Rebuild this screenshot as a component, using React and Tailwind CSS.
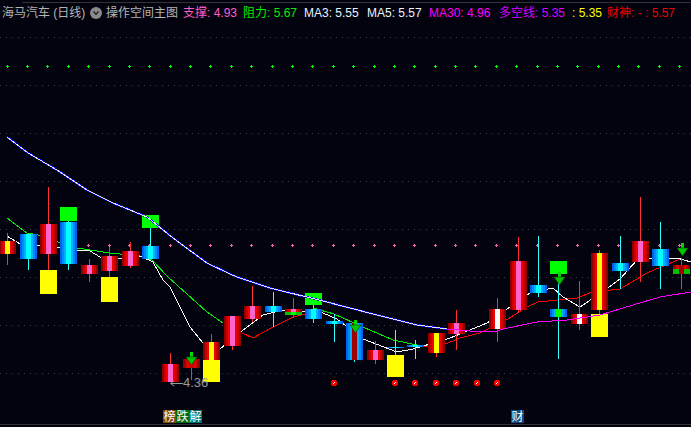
import React from 'react';

const FONT = '"Liberation Sans", "Noto Sans CJK SC", sans-serif';

const STRIPES = {
    r: ['#900000', '#c80000', '#f00000'],
    b: ['#0060f0', '#0088ff', '#00b0ff'],
};

// t: stripe set, c: centre colour, x: left edge, y/h: body, w: wick [top, bottom, colour]
const candles = [
    { t: 'r', c: '#ffff00', x: -1, y: 241, h: 13, w: [233, 265, '#ff3030'] },
    { t: 'b', c: '#00ffff', x: 20, y: 234, h: 25, w: [259, 270, '#30ffff'] },
    { t: 'r', c: '#ff66cc', x: 40, y: 224, h: 30, w: [187, 270, '#ff3030'], box: [270, 24, '#ffff00'] },
    { t: 'b', c: '#00ffff', x: 60, y: 222, h: 42, w: [221, 270, '#30ffff'], box: [207, 14, '#00ff00'] },
    { t: 'r', c: '#ff66cc', x: 81, y: 265, h: 9, w: [259, 282, '#ff3030'] },
    { t: 'r', c: '#ff66cc', x: 101, y: 256, h: 15, w: [247, 277, '#ff3030'], box: [277, 25, '#ffff00'] },
    { t: 'r', c: '#ff66cc', x: 122, y: 251, h: 15, w: [242, 268, '#ff3030'] },
    { t: 'b', c: '#00ffff', x: 142, y: 246, h: 13, w: [228, 246, '#30ffff'], box: [215, 13, '#00ff00'] },
    { t: 'r', c: '#ff66cc', x: 162, y: 364, h: 18, w: [353, 364, '#ff3030'] },
    { t: 'r', c: '#d00000', x: 183, y: 359, h: 9, w: [368, 380, '#ff3030'] },
    { t: 'r', c: '#ffff00', x: 203, y: 342, h: 18, w: [334, 342, '#ff3030'], box: [360, 22, '#ffff00'] },
    { t: 'r', c: '#ff66cc', x: 224, y: 316, h: 30, w: [346, 350, '#ff3030'] },
    { t: 'r', c: '#ff66cc', x: 244, y: 306, h: 13, w: [286, 322, '#ff3030'] },
    { t: 'b', c: '#00ffff', x: 265, y: 306, h: 6, w: [292, 327, '#30ffff'] },
    { t: 'r', c: '#ff66cc', x: 285, y: 309, h: 6, w: [298, 318, '#ff3030'], low: true },
    { t: 'b', c: '#00ffff', x: 305, y: 309, h: 10, w: [305, 323, '#30ffff'], box: [293, 12, '#00ff00'] },
    { t: 'b', c: '#00ffff', x: 326, y: 321, h: 3, w: [314, 342, '#30ffff'] },
    { t: 'b', c: '#a00000', x: 346, y: 323, h: 37, w: [360, 362, '#30ffff'] },
    { t: 'r', c: '#ff66cc', x: 367, y: 350, h: 10, w: [341, 364, '#ff3030'] },
    { t: 'b', c: '#00ffff', x: 387, y: 347, h: 1, w: [330, 355, '#c8c8c8'], box: [355, 22, '#ffff00'] },
    { t: 'b', c: '#00ffff', x: 407, y: 345, h: 2, w: [340, 359, '#c8c8c8'] },
    { t: 'r', c: '#ffff00', x: 428, y: 333, h: 20, w: [353, 357, '#ff3030'] },
    { t: 'r', c: '#ff66cc', x: 448, y: 323, h: 11, w: [310, 350, '#ff3030'] },
    { t: 'r', c: '#ffffff', x: 489, y: 309, h: 20, w: [298, 342, '#ff3030'] },
    { t: 'r', c: '#ff66cc', x: 510, y: 261, h: 49, w: [237, 313, '#ff3030'] },
    { t: 'b', c: '#00ffff', x: 530, y: 285, h: 8, w: [236, 297, '#30ffff'] },
    { t: 'b', c: '#00ff00', x: 550, y: 309, h: 8, w: [274, 359, '#30ffff'], box: [261, 13, '#00ff00'] },
    { t: 'r', c: '#ffffff', x: 571, y: 314, h: 10, w: [281, 330, '#ff3030'] },
    { t: 'r', c: '#ffff00', x: 591, y: 253, h: 57, w: [250, 314, '#ff3030'], box: [314, 23, '#ffff00'] },
    { t: 'b', c: '#00ffff', x: 612, y: 263, h: 8, w: [236, 289, '#30ffff'] },
    { t: 'r', c: '#ff66cc', x: 632, y: 241, h: 21, w: [197, 282, '#ff3030'] },
    { t: 'b', c: '#00ffff', x: 652, y: 249, h: 17, w: [222, 289, '#30ffff'] },
    { t: 'r', c: '#a00000', x: 673, y: 265, h: 9, w: [258, 289, '#ff3030'], low: true },
];

const blueLine = '7,137 28,153 57,170 87,190 113,203 147,217 173,238 207,263 230,274 237,277 270,288 323,301 373,314 417,325 447,329';
const purpleLine = '447,329 470,331 497,331 503,329 537,322 567,320 600,315 633,305 660,297 691,292';
const whiteLine = '7,236 20,244 37,245 77,250 90,251 100,257 120,259 140,256 153,262 163,280 170,287 190,327 203,343 220,349 242,331 263,315 283,310 323,313 337,319 363,339 397,352 413,349 430,344 450,338 460,334 487,323 510,307 530,293 553,288 563,297 580,307 608,288 620,279 637,260 657,258 677,258 691,262';
const redLines = [
    '242,333 253,338 273,327 293,317 305,314',
    '410,346 427,346 443,345 460,338 480,333 503,322 527,307 538,302 577,298 592,292 620,289 647,273 680,259',
];
const greenLines = [
    '7,218 27,233 38,235 58,242 77,248 110,253 140,256 152,260 168,277 187,294 207,312 223,323',
    '313,308 334,314 363,327 393,340 417,345',
];

const grid = [37, 85, 133, 181, 229, 277, 325, 373];
const dots = Array.from({ length: 34 }, (_, i) => Math.round(6.7 + i * 20.38));
const diamonds = [334, 395, 415, 436, 456, 477, 497];
const arrows = [[191, 352], [355, 320], [559, 272], [682, 243]];

function Candle({ t, c, x, y, h, w, box, low }) {
    const [a, b, d] = STRIPES[t];
    const cols = [a, b, d, c, d, b, a];
    const widths = [2, 2, 2, 5, 2, 2, 2];
    let left = x;
    return (
        <g>
            <rect x={x + 8} y={w[0]} width="1" height={w[1] - w[0]} fill={w[2]} />
            {box && <rect x={x} y={box[0]} width="17" height={box[1]} fill={box[2]} />}
            {cols.map((col, i) => {
                const cell = <rect key={i} x={left} y={y} width={widths[i]} height={h} fill={col} />;
                left += widths[i];
                return cell;
            })}
            {low && <rect x={x} y={y + Math.floor(h / 2)} width="17" height={Math.ceil(h / 2)} fill="#00c000" />}
            {low && <rect x={x + 6} y={y + Math.floor(h / 2)} width="5" height={Math.ceil(h / 2)} fill={c === '#a00000' ? '#a00000' : '#00ff00'} />}
        </g>
    );
}

function Plus({ x, y, color }) {
    return (
        <g fill={color}>
            <rect x={x - 1} y={y} width="3" height="1" />
            <rect x={x} y={y - 1} width="1" height="3" />
        </g>
    );
}

function Arrow({ x, y }) {
    return (
        <g>
            <rect x={x - 1} y={y} width="3" height="7" fill="#00d800" />
            <polygon points={`${x - 5},${y + 5} ${x + 6},${y + 5} ${x + 0.5},${y + 13}`} fill="#00c800" stroke="#004000" strokeWidth="0.6" />
        </g>
    );
}

function Stat({ label, value, className, width }) {
    return (
        <span className={`shrink-0 whitespace-pre ${className} ${width}`}>
            {label}: {value}
        </span>
    );
}

function Header() {
    return (
        <div className="flex h-[19px] items-center pl-[2px] text-[12px] leading-none text-[#b4b4b4]">
            <span className="w-[88px] shrink-0 whitespace-pre">海马汽车 (日线)</span>
            <span className="mr-[4px] flex h-[12px] w-[12px] shrink-0 items-center justify-center rounded-full bg-[#8a8a8a]">
                <svg width="8" height="8" viewBox="0 0 8 8">
                    <path d="M1.500 2.500 4 5.200 6.500 2.500" stroke="#222" strokeWidth="1.400" fill="none" />
                </svg>
            </span>
            <span className="w-[77px] shrink-0 whitespace-pre">操作空间主图</span>
            <Stat label="支撑" value="4.93" className="text-[#ff5cc8]" width="w-[60px]" />
            <Stat label="阻力" value="5.67" className="text-[#00f000]" width="w-[61px]" />
            <Stat label="MA3" value="5.55" className="text-[#e6f4ff]" width="w-[63px]" />
            <Stat label="MA5" value="5.57" className="text-[#e6f4ff]" width="w-[62px]" />
            <Stat label="MA30" value="4.96" className="text-[#ff00ff]" width="w-[70px]" />
            <Stat label="多空线" value="5.35" className="text-[#d800ff]" width="w-[73px]" />
            <span className="w-[35px] shrink-0 whitespace-pre text-[#ffff00]">: 5.35</span>
            <span className="shrink-0 whitespace-pre text-[#f00000]">财神: - : 5.57</span>
        </div>
    );
}

function Chart() {
    return (
        <svg className="block" width="691" height="405" viewBox="0 22 691 405">
            <g shapeRendering="crispEdges">
                {grid.map(y => (
                    <line key={y} x1="0" x2="691" y1={y + 0.5} y2={y + 0.5} stroke="#3a3a3a" strokeDasharray="1 5" />
                ))}
                <line x1="0" x2="691" y1="424.5" y2="424.5" stroke="#333" />
                {dots.map(x => <Plus key={x} x={x} y={66} color="#00ff00" />)}
                {dots.slice(4).map(x => <Plus key={x} x={x} y={245} color="#ff60c0" />)}
            </g>
            <g fill="none" shapeRendering="crispEdges">
                {greenLines.map(p => <polyline key={p} points={p} stroke="#00f000" />)}
                {redLines.map(p => <polyline key={p} points={p} stroke="#ff0000" />)}
                <polyline points={whiteLine} stroke="#ffffff" />
            </g>
            <g shapeRendering="crispEdges">
                {candles.map(c => <Candle key={c.x} {...c} />)}
            </g>
            <g fill="none" shapeRendering="crispEdges">
                <polyline points={blueLine} stroke="#1010ff" strokeWidth="2" />
                <polyline points={blueLine} stroke="#e0e0ff" />
                <polyline points={purpleLine} stroke="#ff00ff" />
            </g>
            {arrows.map(([x, y]) => <Arrow key={x} x={x} y={y} />)}
            {diamonds.map(x => (
                <g key={x} shapeRendering="crispEdges">
                    <rect x={x - 3} y="381" width="6" height="4" fill="#ff0000" />
                    <rect x={x - 2} y="380" width="4" height="6" fill="#ff0000" />
                    <rect x={x} y="382" width="1" height="1" fill="#ffffff" />
                    <rect x={x - 1} y="383" width="1" height="1" fill="#ffffff" />
                </g>
            ))}
            <path d="M183 383.500h-12M174 381l-3.500 2.500 3.500 2.500" stroke="#9a9a9a" fill="none" />
        </svg>
    );
}

function Tag({ className, children }) {
    return (
        <span className={`flex h-[13px] w-[13px] items-center justify-center text-[12px] leading-none text-white ${className}`}>
            {children}
        </span>
    );
}

export default function App() {
    return (
        <div className="relative h-[427px] w-[691px] overflow-hidden bg-[#03030f]" style={{ fontFamily: FONT }}>
            <div className="ml-[22px] h-[3px] border-b border-[#333]" />
            <Header />
            <Chart />
            <span className="absolute left-[183px] top-[376px] text-[13px] leading-[14px] text-[#9a9a9a]">4.36</span>
            <div className="absolute left-[163px] top-[410px] flex">
                <Tag className="bg-[#7a4a10]">榜</Tag>
                <Tag className="bg-[#006a10]">跌</Tag>
                <Tag className="bg-[#007078]">解</Tag>
            </div>
            <div className="absolute left-[511px] top-[410px] flex">
                <Tag className="bg-[#0a4a80]">财</Tag>
            </div>
        </div>
    );
}
